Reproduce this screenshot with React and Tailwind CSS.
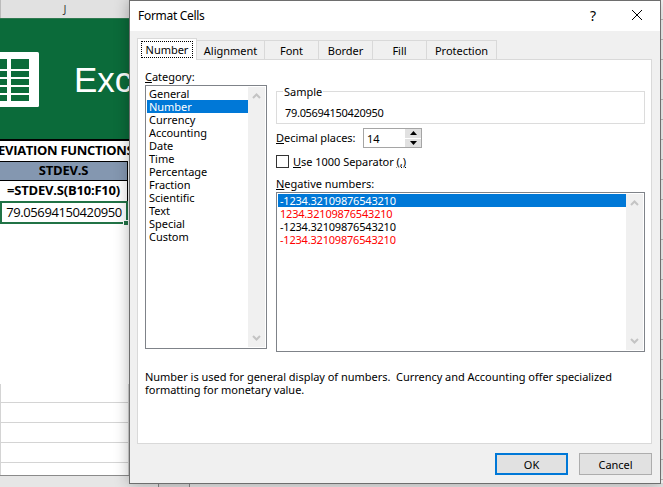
const CATEGORIES = ["General","Number","Currency","Accounting","Date","Time","Percentage","Fraction","Scientific","Text","Special","Custom"];
const NEGATIVES = [
  { t: "-1234.32109876543210", c: "text-white bg-[#0078d7]" },
  { t: "1234.32109876543210", c: "text-[#ff0000]" },
  { t: "-1234.32109876543210", c: "text-black" },
  { t: "-1234.32109876543210", c: "text-[#ff0000]" },
];
const TABS = [
  { t: "Alignment", w: "w-[68px]" },
  { t: "Font", w: "w-[54px]" },
  { t: "Border", w: "w-[54px]" },
  { t: "Fill", w: "w-[54px]" },
  { t: "Protection", w: "w-[70px]" },
];

function Chevron({ up }) {
  return (
    <svg width="9" height="6" viewBox="0 0 9 6" fill="none" stroke="#c4c4c4" strokeWidth="2">
      <path d={up ? "M1 5 L4.5 1.5 L8 5" : "M1 1 L4.5 4.5 L8 1"} />
    </svg>
  );
}

function Scroll() {
  return (
    <div className="w-[17px] bg-[#f0f0f0] flex flex-col justify-between items-center py-[6px] shrink-0">
      <Chevron up />
      <Chevron />
    </div>
  );
}

function Sheet() {
  return (
    <div className="w-[129px] h-full flex flex-col overflow-hidden font-['Open_Sans',sans-serif]">
      <div className="h-[18px] shrink-0 bg-[#e1e1e1] flex items-center justify-center text-[11px] text-[#333] border-l border-[#bbb]">J</div>
      <div className="h-[1px] shrink-0 bg-[#2f7a50]" />
      <div className="h-[120px] shrink-0 bg-[#0b6b3a] flex items-center">
        <svg width="39" height="55" viewBox="0 0 39 55" className="shrink-0">
          <rect x="-5" y="0" width="44" height="55" rx="1.5" fill="#fff" />
          <g fill="#0b6b3a">
            <rect x="0" y="7" width="7" height="10" /><rect x="11" y="7" width="18" height="10" />
            <rect x="0" y="19" width="7" height="6" /><rect x="11" y="19" width="18" height="6" />
            <rect x="0" y="27" width="7" height="6" /><rect x="11" y="27" width="18" height="6" />
            <rect x="0" y="35" width="7" height="6" /><rect x="11" y="35" width="18" height="6" />
            <rect x="0" y="43" width="7" height="6" /><rect x="11" y="43" width="18" height="6" />
          </g>
        </svg>
        <span className="ml-[35px] text-[35px] leading-none text-white whitespace-nowrap font-['Liberation_Sans',sans-serif]">Excel</span>
      </div>
      <div className="h-[2px] shrink-0 bg-black" />
      <div className="h-[20px] shrink-0 bg-white flex items-center text-[13px] font-bold text-black whitespace-nowrap -ml-[2px] font-['Open_Sans',sans-serif] tracking-[-0.3px]">EVIATION FUNCTIONS</div>
      <div className="h-[20px] shrink-0 w-[128px] bg-[#8497b0] border border-l-0 border-black flex items-center justify-center text-[13px] font-bold text-black tracking-[-0.2px]">STDEV.S</div>
      <div className="h-[20px] shrink-0 w-[128px] bg-white border-r border-black flex items-center justify-center text-[13px] font-bold text-black tracking-[-0.2px] whitespace-nowrap">=STDEV.S(B10:F10)</div>
      <div className="relative h-[23px] shrink-0 w-[128px] border-2 border-[#217346] bg-white flex items-center justify-center text-[13px] text-black tracking-[-0.4px]">
        79.05694150420950
        <div className="absolute right-[-3px] bottom-[-4px] w-[6px] h-[6px] bg-[#217346] border border-white" />
      </div>
      <div className="h-[160px] shrink-0 bg-white" />
      <div className="flex-1 flex flex-col border-l border-[#d4d4d4]">
        {[19, 20, 20, 20, 13].map((h, i) => (
          <div key={i} style={{ height: h }} className="w-[128px] shrink-0 border-r border-b border-[#d4d4d4] bg-white" />
        ))}
      </div>
      <div className="h-[12px] shrink-0 -mt-[1px] border-t border-[#8a8a8a] bg-[#e6e6e6]" />
    </div>
  );
}

function Dialog() {
  return (
    <div className="absolute left-[129px] top-0 w-[532px] h-[484px] flex flex-col border border-[#6e6e6e] bg-[#f0f0f0] shadow-[0_0_14px_rgba(0,0,0,0.3)] text-[11px] leading-[13px] text-black tracking-[-0.03px]">
      <div className="h-[30px] shrink-0 bg-white flex items-center pl-[8px] text-[12px] tracking-[-0.3px] pb-[2px]">
        <span className="flex-1">Format Cells</span>
        <span className="text-[14px] w-[20px] text-center mr-[28px]">?</span>
        <svg width="12" height="12" viewBox="0 0 12 12" stroke="#000" strokeWidth="1" className="mr-[17px]"><path d="M1 1 L11 11 M11 1 L1 11" /></svg>
      </div>
      <div className="flex-1 flex flex-col pl-[7px] pt-[7px]">
        <div className="flex items-end h-[22px] shrink-0 -mb-[1px] relative">
          <div className="w-[60px] h-[22px] bg-white border border-b-0 border-[#d9d9d9] flex items-center justify-center relative z-10 pb-[1px]">
            <span className="border border-dotted border-black px-[4px] py-[1px]">Number</span>
          </div>
          {TABS.map((t) => (
            <div key={t.t} className={`${t.w} h-[20px] border border-l-0 border-b-0 border-[#d9d9d9] flex items-center justify-center`}>{t.t}</div>
          ))}
        </div>
        <div className="w-[515px] h-[385px] shrink-0 bg-white border border-[#d9d9d9] flex flex-col">
          <div className="flex">
            <div className="ml-[7px] w-[122px] mt-[9px] shrink-0">
              <div className="h-[16px] flex items-center pb-[2px]"><span><span className="underline">C</span>ategory:</span></div>
              <div className="h-[264px] border border-[#7f8389] p-px flex">
                <div className="flex-1">
                  {CATEGORIES.map((c) => (
                    <div key={c} className={c === "Number" ? "h-[13px] pl-[2px] bg-[#0078d7] text-white" : "h-[13px] pl-[2px]"}>{c}</div>
                  ))}
                </div>
                <Scroll />
              </div>
            </div>
            <div className="ml-[9px] w-[369px] mt-[31px] shrink-0">
              <div className="relative h-[33px] border border-[#dcdcdc] flex items-center pl-[8px] pt-[9px] tracking-[-0.3px]">
                <span className="absolute left-[6px] -top-[7px] bg-white px-px tracking-[-0.03px]">Sample</span>
                79.05694150420950
              </div>
              <div className="mt-[4px] h-[20px] flex items-center">
                <span className="w-[87px] pb-[1px]"><span className="underline">D</span>ecimal places:</span>
                <div className="w-[59px] h-[20px] border border-[#a5a5a5] flex items-center pl-[3px]">
                  <span className="flex-1">14</span>
                  <div className="w-[16px] h-[18px] flex flex-col gap-px">
                    <div className="flex-1 bg-[#e1e1e1] flex items-center justify-center"><svg width="7" height="4" viewBox="0 0 7 4"><path d="M0 4 L3.5 0 L7 4Z" fill="#000" /></svg></div>
                    <div className="flex-1 bg-[#e1e1e1] flex items-center justify-center"><svg width="7" height="4" viewBox="0 0 7 4"><path d="M0 0 L3.5 4 L7 0Z" fill="#000" /></svg></div>
                  </div>
                </div>
              </div>
              <div className="mt-[7px] h-[13px] flex items-center">
                <span className="w-[13px] h-[13px] border border-[#333] mr-[4px]" />
                <span><span className="underline">U</span>se 1000 Separator <span className="underline">(,)</span></span>
              </div>
              <div className="mt-[8px] h-[16px] flex items-center pb-[2px]"><span><span className="underline">N</span>egative numbers:</span></div>
              <div className="h-[160px] border border-[#7f8389] p-px flex">
                <div className="flex-1 tracking-[-0.2px]">
                  {NEGATIVES.map((n, i) => (
                    <div key={i} className={`h-[13px] pl-[2px] ${n.c}`}>{n.t}</div>
                  ))}
                </div>
                <Scroll />
              </div>
            </div>
          </div>
          <div className="ml-[7px] mt-[18px] whitespace-pre">{"Number is used for general display of numbers.  Currency and Accounting offer specialized\nformatting for monetary value."}</div>
        </div>
        <div className="w-[515px] shrink-0 mt-[9px] flex justify-end gap-[11px]">
          <div className="w-[73px] h-[22px] bg-[#e1e1e1] border-2 border-[#0078d7] flex items-center justify-center">OK</div>
          <div className="w-[73px] h-[22px] bg-[#e1e1e1] border border-[#adadad] flex items-center justify-center">Cancel</div>
        </div>
      </div>
    </div>
  );
}

function RightStrip() {
  const rows = Array.from({ length: 25 });
  return (
    <div className="ml-auto w-[2px] h-full bg-white flex flex-col overflow-hidden">
      {rows.map((_, i) => (
        <div key={i} className="h-[20px] shrink-0 border-b border-[#c4c4c4]" />
      ))}
    </div>
  );
}

export default function App() {
  return (
    <div className="relative w-[663px] h-[487px] overflow-hidden bg-white flex font-['Noto_Sans',sans-serif]">
      <Sheet />
      <RightStrip />
      <div className="absolute left-[129px] right-0 bottom-0 h-[4px] bg-[#e6e6e6]">
        <div className="absolute left-[29px] top-0 w-[32px] h-[4px] border-x border-[#8a8a8a] bg-[#dcdcdc]" />
      </div>
      <Dialog />
    </div>
  );
}
